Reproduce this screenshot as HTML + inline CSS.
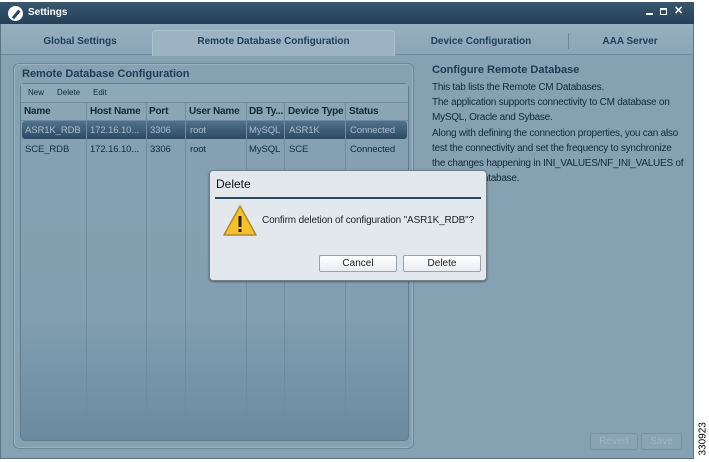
<!DOCTYPE html>
<html><head><meta charset="utf-8"><style>
*{margin:0;padding:0;box-sizing:border-box}
body{width:709px;height:462px;background:#fff;position:relative;overflow:hidden;font-family:"Liberation Sans",sans-serif}
.a{position:absolute}
#win{left:0;top:2px;width:694px;height:457px;background:#86a1b2;border:1px solid #5c7486}
#title{left:0;top:2px;width:694px;height:22px;background:linear-gradient(#3a5770,#234058);}
.tab{position:absolute;top:25px;height:31px;font-size:10px;font-weight:bold;color:#1f3d55;text-align:center;line-height:31px}
#tabs{left:1px;top:24px;width:692px;height:31px;background:linear-gradient(#97b0c0,#8aa5b7);border-bottom:1px solid #6f8a9c}
#panel{left:13px;top:63px;width:401px;height:386px;border:1px solid #6b879a;border-radius:6px;background:#86a1b2;box-shadow:inset 0 0 0 1px #9ab2c1}
#table{left:20px;top:83px;width:389px;height:358px;border:1px solid #5f7b8f;border-radius:5px;background:linear-gradient(#86a1b2 0%,#829fb1 65%,#6a8a9e 100%);overflow:hidden}
.vl{position:absolute;top:103px;width:1px;height:336px;background:#6f8c9f}
.hd{position:absolute;top:106px;font-size:10px;font-weight:bold;color:#11283b;letter-spacing:-0.2px}
.c{position:absolute;font-size:9.5px;color:#13293b;letter-spacing:-0.1px}
.s{color:#a9bccb}
.rt{font-size:10px;color:#13293b;left:432px;position:absolute;line-height:15.2px;width:270px;letter-spacing:-0.25px}
#dlg{left:209px;top:170px;width:278px;height:111px;background:#e3e8ec;border:1px solid #6e7f8c;border-radius:4px;box-shadow:0 1px 2px rgba(0,0,0,.4)}
.btn{position:absolute;height:17px;background:linear-gradient(#fff,#e9ecef);border:1px solid #98a3ad;border-radius:2px;font-size:10px;text-align:center;line-height:15px;color:#222}
.dbtn{position:absolute;height:17px;border:1px solid #7892a3;border-radius:3px;background:#8aa4b5;font-size:10px;color:#9fb6c5;text-align:center;line-height:15px}
</style></head><body>
<div id="win" class="a"></div>
<div id="title" class="a"></div>
<div class="a" style="left:8px;top:6px;width:15px;height:15px;border-radius:50%;background:#fff"></div>
<div class="a" style="left:11px;top:13px;width:10px;height:2.5px;background:#2b4760;transform:rotate(-50deg)"></div>
<div class="a" style="left:28px;top:7px;font-size:10px;font-weight:bold;color:#fff">Settings</div>
<div class="a" style="left:646px;top:13px;width:7px;height:2px;background:#fff"></div>
<div class="a" style="left:660px;top:8px;width:7px;height:7px;border:1.5px solid #fff;border-top-width:2.5px"></div>
<div class="a" style="left:674px;top:4px;font-size:11px;font-weight:bold;color:#fff">✕</div>
<div id="tabs" class="a"></div>
<div class="tab" style="left:8px;width:144px;top:26px">Global Settings</div>
<div class="tab" style="left:152px;width:243px;top:30px;height:26px;line-height:22px;background:#9bb3c3;border:1px solid #aec2cf;border-bottom:none;border-radius:4px 4px 0 0">Remote Database Configuration</div>
<div class="tab" style="left:395px;width:172px;top:26px">Device Configuration</div>
<div class="a" style="left:568px;top:33px;width:1px;height:16px;background:#6d889a"></div>
<div class="tab" style="left:570px;width:120px;top:26px">AAA Server</div>

<div id="panel" class="a"></div>
<div class="a" style="left:22px;top:68px;font-size:11px;font-weight:bold;color:#1d3b54">Remote Database Configuration</div>
<div id="table" class="a"></div>
<div class="a" style="left:21px;top:84px;width:387px;height:19px;background:#8ea8b9;border-bottom:1px solid #718c9e"></div>
<div class="a" style="left:28px;top:88px;font-size:8px;color:#12283a">New</div>
<div class="a" style="left:57px;top:88px;font-size:8px;color:#12283a">Delete</div>
<div class="a" style="left:93px;top:88px;font-size:8px;color:#12283a">Edit</div>
<div class="a" style="left:21px;top:103px;width:387px;height:18px;background:#8ba5b6;border-bottom:1px solid #6f8a9c"></div>
<div class="a" style="left:22px;top:121px;width:385px;height:18px;border-radius:3px;background:linear-gradient(#52728c,#2b4b64)"></div>
<div class="vl" style="left:86px"></div><div class="vl" style="left:146px"></div><div class="vl" style="left:185px"></div><div class="vl" style="left:246px"></div><div class="vl" style="left:284px"></div><div class="vl" style="left:345px"></div>
<div class="hd" style="left:24px">Name</div><div class="hd" style="left:90px">Host Name</div><div class="hd" style="left:149px">Port</div><div class="hd" style="left:189px">User Name</div><div class="hd" style="left:249px">DB Ty...</div><div class="hd" style="left:288px">Device Type</div><div class="hd" style="left:349px">Status</div>
<div class="c s" style="left:25px;top:125px">ASR1K_RDB</div><div class="c s" style="left:90px;top:125px">172.16.10...</div><div class="c s" style="left:150px;top:125px">3306</div><div class="c s" style="left:190px;top:125px">root</div><div class="c s" style="left:249px;top:125px">MySQL</div><div class="c s" style="left:289px;top:125px">ASR1K</div><div class="c s" style="left:350px;top:125px">Connected</div>
<div class="c" style="left:25px;top:144px">SCE_RDB</div><div class="c" style="left:90px;top:144px">172.16.10...</div><div class="c" style="left:150px;top:144px">3306</div><div class="c" style="left:190px;top:144px">root</div><div class="c" style="left:249px;top:144px">MySQL</div><div class="c" style="left:289px;top:144px">SCE</div><div class="c" style="left:350px;top:144px">Connected</div>

<div class="a" style="left:432px;top:64px;font-size:11px;font-weight:bold;color:#1d3b54">Configure Remote Database</div>
<div class="rt" style="top:80px">This tab lists the Remote CM Databases.<br>The application supports connectivity to CM database on<br>MySQL, Oracle and Sybase.<br>Along with defining the connection properties, you can also<br>test the connectivity and set the frequency to synchronize<br>the changes happening in INI_VALUES/NF_INI_VALUES of<br>a Remote Database.</div>

<div class="dbtn" style="left:590px;top:433px;width:48px">Revert</div>
<div class="dbtn" style="left:641px;top:433px;width:41px">Save</div>

<div id="dlg" class="a"></div>
<div class="a" style="left:216px;top:177px;font-size:12px;color:#111">Delete</div>
<div class="a" style="left:215px;top:197px;width:266px;height:2px;background:#2b4760"></div>
<svg class="a" style="left:222px;top:204px" width="36" height="34" viewBox="0 0 36 34"><path d="M18 2 L34 31 L2 31 Z" fill="#f6c12a" stroke="#b08a2a" stroke-width="1.5" stroke-linejoin="round"/><rect x="16.5" y="12" width="3" height="11" fill="#222"/><rect x="16.5" y="25" width="3" height="3" fill="#222"/></svg>
<div class="a" style="left:262px;top:215px;font-size:10px;color:#222;letter-spacing:-0.15px">Confirm deletion of configuration "ASR1K_RDB"?</div>
<div class="btn" style="left:319px;top:255px;width:78px">Cancel</div>
<div class="btn" style="left:403px;top:255px;width:78px">Delete</div>

<div class="a" style="left:683px;top:430px;width:40px;font-size:10px;color:#000;transform:rotate(-90deg);transform-origin:center">330923</div>
</body></html>
